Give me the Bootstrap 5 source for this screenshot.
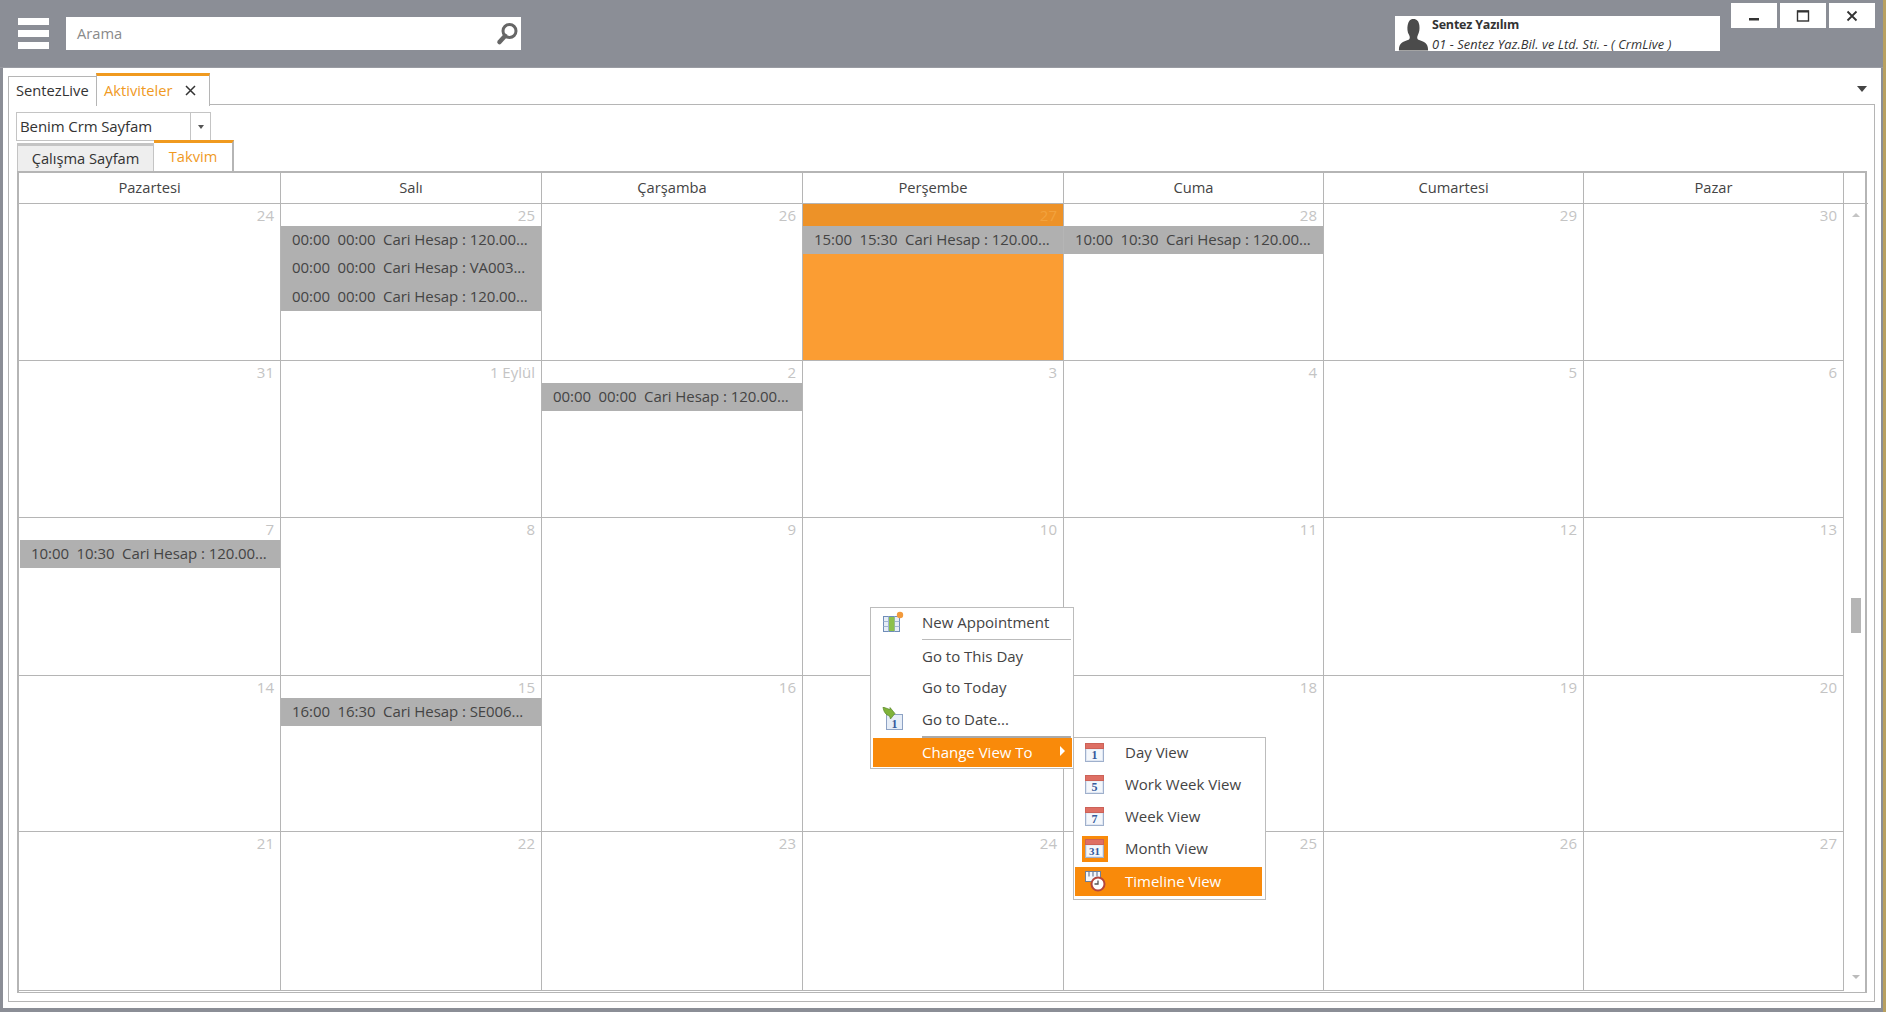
<!DOCTYPE html>
<html lang="tr">
<head>
<meta charset="utf-8">
<title>Takvim</title>
<link rel="stylesheet" href="https://cdn.jsdelivr.net/npm/bootstrap@5.3.0/dist/css/bootstrap.min.css">
<style>
html,body{height:100%;overflow:hidden}
body{background:#8b8e96;font-family:"Open Sans","Noto Sans",sans-serif;font-size:14.7px;color:#444;border-right:3px solid #b8a060}
.app-shell{height:1012px;width:1883px}
.top-bar{height:68px;flex:none;padding-left:18px;position:relative;border-bottom:1px solid #9a9ca3}
.burger{width:31px;height:31px;margin-top:18px;display:flex;flex-direction:column;justify-content:space-between;flex:none}
.burger i{display:block;height:7px;background:#fff}
.search-box{width:455px;height:33px;margin:17px 0 0 17px;background:#fff;color:#8a8a8a;padding:0 2px 0 11px;flex:none}
.user-box{width:325px;height:35px;background:#fff;margin:16px 0 0 874px;flex:none;color:#333;line-height:1}
.user-name{font-weight:700;font-size:12.5px;margin-top:3px;letter-spacing:-.2px}
.user-firm{font-style:italic;font-size:12.8px;margin-top:6px;letter-spacing:.1px;white-space:nowrap}
.win-btns{margin:3px 0 0 11px;gap:3px}
.win-btn{width:46px;height:25px;background:#fff;display:flex;align-items:center;justify-content:center;padding:0;border:0;border-radius:0}
.win-body{flex:1;background:#fff;margin:0 2px 4px 3px;padding:5px 6px 6px 5px;min-height:0;position:relative;display:flex;flex-direction:column}
.doc-tabs{height:32px;flex:none;position:relative;border-bottom:1px solid #b5b5b5;flex-wrap:nowrap}
.doc-tab{border:1px solid #b5b5b5;border-bottom:0;height:29px;margin-top:3px;padding:0 7px 2px;display:flex;align-items:center;color:#333;background:#fff;position:relative}
.doc-tab.tab-first{width:89px}
.doc-tab.tab-on{width:114px;height:33px;margin-top:0;border-top:3px solid #f09a1f;color:#f09a1f;padding-top:0;margin-left:-1px;justify-content:space-between;padding-right:13px;margin-bottom:-1px}
.tab-menu{margin-left:auto;margin-right:8px;margin-top:13px;width:0;height:0;border:5px solid transparent;border-top:6px solid #444;border-bottom:0}
.doc-panel{flex:1;border:1px solid #b5b5b5;border-top:0;padding:7px 7px 8px 7px;min-height:0;display:flex;flex-direction:column}
.combo{width:195px;height:29px;border:1px solid #c4c4c4;flex:none;color:#333}
.combo-text{flex:1;padding-left:3px;line-height:27px;font-size:15px;letter-spacing:-.1px}
.combo-arrow{width:20px;border-left:1px solid #c4c4c4;display:flex;align-items:center;justify-content:center}
.combo-arrow b{width:0;height:0;border:3px solid transparent;border-top:4px solid #555;border-bottom:0}
.sub-tabs{height:31px;flex:none;margin-top:-1px;margin-left:1px;position:relative;flex-wrap:nowrap;align-items:flex-end}
.sub-tab{height:28px;display:flex;align-items:center;justify-content:center;border:1px solid #c4c4c4;border-bottom:0;background:#eee;color:#333;width:137px;border-top:3px solid #c4c4c4}
.sub-tab.tab-on{height:31px;width:80px;background:#fff;border-top:3px solid #f09a1f;color:#f09a1f;border-left:0;border-right:2px solid #b5b5b5;padding-bottom:2px}
.cal-grid{flex:1;display:grid;grid-template-columns:262px 261px 261px 261px 260px 260px 260px 24px;grid-template-rows:31px 157px 157px 158px 156px 159px;border:2px solid #b5b5b5;border-bottom:1px solid #b5b5b5;margin-left:1px;width:1850px;position:relative;min-height:0;outline:1px solid #b5b5b5;outline-offset:-1px}
.cal-head{display:flex;align-items:center;justify-content:center;border-right:1px solid #b5b5b5;border-bottom:1px solid #b5b5b5;color:#444;padding-bottom:1px}
.cal-corner{border-bottom:1px solid #b5b5b5}
.cal-cell{border-right:1px solid #b5b5b5;border-bottom:1px solid #b5b5b5;overflow:hidden;background:#fff}
.cal-day{height:22px;line-height:22px;text-align:right;padding-right:6px;color:#c4c4c4;font-size:15px}
.cal-event{height:28.3px;line-height:27px;background:#b0b0b0;color:#444;padding-left:11px;white-space:pre;font-size:15px;letter-spacing:-.07px}
.cal-event.ev-inset{margin-left:1px}
.cal-cell.cell-today{background:#fb9d33}
.cal-cell.cell-today .cal-day{background:#ed9228;color:#f2a23e}
.cal-scroll{grid-column:8;grid-row:2/7;position:relative;display:flex;flex-direction:column;align-items:center;padding:9px 0 12px}
.arr-up{width:0;height:0;border:4px solid transparent;border-bottom:4px solid #c4c4c4;border-top:0}
.arr-down{width:0;height:0;border:4px solid transparent;border-top:4px solid #bbb;border-bottom:0;margin-top:auto}
.thumb{width:10px;height:35px;background:#b5b5b5;margin-top:381px}
.ctx-menu{position:absolute;display:block;border:1px solid #bcbcbc;border-radius:0;background:#fff;padding:0;margin:0;min-width:0;box-shadow:none;color:#444;font-size:15px;z-index:5}
.ctx-main{left:867px;top:539px;width:204px;height:162px;padding:0 1px 2px 2px}
.ctx-sub{left:1070px;top:669px;width:193px;height:163px;padding:0 3px 0 1px}
.ctx-sub li:first-child{margin-top:-1.4px}
.ctx-menu .dropdown-item{display:flex;align-items:center;padding:0;color:#444;background:transparent;position:relative}
.ctx-ico{width:49px;flex:none;display:flex;justify-content:center;padding-right:9px}
.ctx-sub .ctx-ico{width:50px;padding-right:11px}
.ctx-main .dropdown-item{height:31.5px}
.ctx-main li:first-child .dropdown-item{height:28.7px;margin-bottom:2.6px}
.ctx-sub .dropdown-item{height:32px}
.ctx-menu .dropdown-item.item-on{background:#f98a0a;color:#fff;height:29px}
.ctx-sub .dropdown-item.item-on{margin-top:2.4px;height:28.5px}
.ctx-rule{height:1px;background:#bbb;margin-left:49px;margin-right:1px}
.ctx-rule.rule-thick{height:2px;background:#aaa;margin-top:1.2px}
.sub-arrow{position:absolute;right:7px;top:8px;width:0;height:0;border:5px solid transparent;border-left:5px solid #fff;border-right:0}
.month-ico{background:#f98a0a;width:26px;height:26px;display:flex;align-items:center;justify-content:center}
svg text{font-family:"Liberation Serif",serif;font-weight:700}
</style>
</head>
<body>
<svg width="0" height="0" class="position-absolute">
<defs>
<g id="calbase">
<rect x=".5" y=".5" width="18" height="18" fill="#dfe6f2" stroke="#9fb0cc"/>
<rect x=".5" y=".5" width="18" height="5" fill="#de6f64" stroke="#cc6258"/>
<rect x="2" y="6.5" width="15" height="10.5" fill="#f4f7fb"/>
</g>
</defs>
</svg>
<div class="app-shell d-flex flex-column">
  <header class="top-bar d-flex">
    <div class="burger"><i></i><i></i><i></i></div>
    <div class="search-box d-flex align-items-center justify-content-between">
      <span>Arama</span>
      <svg width="24" height="26" viewBox="0 0 24 26"><circle cx="14.5" cy="10" r="6.5" fill="none" stroke="#666" stroke-width="3"/><path d="M10 15 L4.5 21" stroke="#666" stroke-width="4.500" stroke-linecap="round"/></svg>
    </div>
    <div class="user-box d-flex">
      <svg width="37" height="35" viewBox="0 0 38 35"><path d="M4 35 C4 27 8 26 14 24 C15.500 23 15.500 21 14.500 19 C12.500 16 12.500 12 13 9 C14 4 16 2.500 19 2.500 C22.500 2.500 24.500 5 25 9 C25.500 13 25 16 23.500 19 C22.500 21 22.500 23 24 24 C30 26 34 27 34 35 Z" fill="#4b4b4b"/></svg>
      <div>
        <div class="user-name">Sentez Yazılım</div>
        <div class="user-firm">01 - Sentez Yaz.Bil. ve Ltd. Sti. - ( CrmLive )</div>
      </div>
    </div>
    <div class="win-btns d-flex">
      <button class="win-btn" type="button" aria-label="Simge durumuna küçült"><svg width="14" height="14" viewBox="0 0 14 14"><rect x="2" y="9" width="10" height="2.500" fill="#333"/></svg></button>
      <button class="win-btn" type="button" aria-label="Ekranı kapla"><svg width="14" height="14" viewBox="0 0 14 14"><rect x="1.500" y="2" width="11" height="10" fill="none" stroke="#333" stroke-width="1.400"/><rect x="1" y="1.500" width="12" height="2" fill="#333"/></svg></button>
      <button class="win-btn" type="button" aria-label="Kapat"><svg width="14" height="14" viewBox="0 0 14 14"><path d="M2.500 2.500 L11.500 11.500 M11.500 2.500 L2.500 11.500" stroke="#333" stroke-width="1.800"/></svg></button>
    </div>
  </header>

  <main class="win-body">
    <div class="doc-tabs d-flex">
      <div class="doc-tab tab-first">SentezLive</div>
      <div class="doc-tab tab-on"><span>Aktiviteler</span><svg width="11" height="11" viewBox="0 0 11 11"><path d="M1 1 L10 10 M10 1 L1 10" stroke="#333" stroke-width="1.500"/></svg></div>
      <span class="tab-menu"></span>
    </div>
    <div class="doc-panel">
      <div class="combo d-flex"><div class="combo-text">Benim Crm Sayfam</div><div class="combo-arrow"><b></b></div></div>
      <div class="sub-tabs d-flex">
        <div class="sub-tab">Çalışma Sayfam</div>
        <div class="sub-tab tab-on">Takvim</div>
      </div>
      <div class="cal-grid">
        <div class="cal-head">Pazartesi</div><div class="cal-head">Salı</div><div class="cal-head">Çarşamba</div><div class="cal-head">Perşembe</div><div class="cal-head">Cuma</div><div class="cal-head">Cumartesi</div><div class="cal-head">Pazar</div><div class="cal-corner"></div>

        <div class="cal-cell" style="grid-column:1"><div class="cal-day">24</div></div>
        <div class="cal-cell"><div class="cal-day">25</div><div class="cal-event">00:00  00:00  Cari Hesap : 120.00...</div><div class="cal-event">00:00  00:00  Cari Hesap : VA003...</div><div class="cal-event">00:00  00:00  Cari Hesap : 120.00...</div></div>
        <div class="cal-cell"><div class="cal-day">26</div></div>
        <div class="cal-cell cell-today"><div class="cal-day">27</div><div class="cal-event">15:00  15:30  Cari Hesap : 120.00...</div></div>
        <div class="cal-cell"><div class="cal-day">28</div><div class="cal-event">10:00  10:30  Cari Hesap : 120.00...</div></div>
        <div class="cal-cell"><div class="cal-day">29</div></div>
        <div class="cal-cell"><div class="cal-day">30</div></div>

        <div class="cal-cell" style="grid-column:1"><div class="cal-day">31</div></div>
        <div class="cal-cell"><div class="cal-day">1 Eylül</div></div>
        <div class="cal-cell"><div class="cal-day">2</div><div class="cal-event">00:00  00:00  Cari Hesap : 120.00...</div></div>
        <div class="cal-cell"><div class="cal-day">3</div></div>
        <div class="cal-cell"><div class="cal-day">4</div></div>
        <div class="cal-cell"><div class="cal-day">5</div></div>
        <div class="cal-cell"><div class="cal-day">6</div></div>

        <div class="cal-cell" style="grid-column:1"><div class="cal-day">7</div><div class="cal-event ev-inset">10:00  10:30  Cari Hesap : 120.00...</div></div>
        <div class="cal-cell"><div class="cal-day">8</div></div>
        <div class="cal-cell"><div class="cal-day">9</div></div>
        <div class="cal-cell"><div class="cal-day">10</div></div>
        <div class="cal-cell"><div class="cal-day">11</div></div>
        <div class="cal-cell"><div class="cal-day">12</div></div>
        <div class="cal-cell"><div class="cal-day">13</div></div>

        <div class="cal-cell" style="grid-column:1"><div class="cal-day">14</div></div>
        <div class="cal-cell"><div class="cal-day">15</div><div class="cal-event">16:00  16:30  Cari Hesap : SE006...</div></div>
        <div class="cal-cell"><div class="cal-day">16</div></div>
        <div class="cal-cell"><div class="cal-day">17</div></div>
        <div class="cal-cell"><div class="cal-day">18</div></div>
        <div class="cal-cell"><div class="cal-day">19</div></div>
        <div class="cal-cell"><div class="cal-day">20</div></div>

        <div class="cal-cell" style="grid-column:1"><div class="cal-day">21</div></div>
        <div class="cal-cell"><div class="cal-day">22</div></div>
        <div class="cal-cell"><div class="cal-day">23</div></div>
        <div class="cal-cell"><div class="cal-day">24</div></div>
        <div class="cal-cell"><div class="cal-day">25</div></div>
        <div class="cal-cell"><div class="cal-day">26</div></div>
        <div class="cal-cell"><div class="cal-day">27</div></div>

        <div class="cal-scroll"><span class="arr-up"></span><span class="thumb"></span><span class="arr-down"></span></div>
      </div>
    </div>

    <ul class="dropdown-menu ctx-menu ctx-main list-unstyled">
      <li><a class="dropdown-item" href="#"><span class="ctx-ico"><svg width="22" height="22" viewBox="0 0 22 22"><rect x="1.500" y="5.500" width="16" height="15" fill="#e6edf7" stroke="#6f8db8"/><path d="M1.500 10.500H17.500M1.500 15.500H17.500M6.500 5.500V20.500M12.500 5.500V20.500" stroke="#9fb4d3"/><rect x="7" y="6" width="5.500" height="14" fill="#8cc04b"/><circle cx="18" cy="4" r="3.200" fill="#f29a3c"/></svg></span>New Appointment</a></li>
      <li class="ctx-rule"></li>
      <li><a class="dropdown-item" href="#"><span class="ctx-ico"></span>Go to This Day</a></li>
      <li><a class="dropdown-item" href="#"><span class="ctx-ico"></span>Go to Today</a></li>
      <li><a class="dropdown-item" href="#"><span class="ctx-ico"><svg width="22" height="24" viewBox="0 0 22 24"><rect x="4.500" y="7.500" width="16" height="15" fill="#e6edf7" stroke="#8da2c4"/><text x="12.500" y="20.500" font-size="12" fill="#345a9c" text-anchor="middle">1</text><path d="M1 0 L8 2.500 L8 .5 L13 6.500 L8.500 12 L7.500 9 C4 8 1.500 5 1 0Z" fill="#7fb23a" stroke="#4f7f1f" stroke-width=".6"/></svg></span>Go to Date...</a></li>
      <li class="ctx-rule rule-thick"></li>
      <li><a class="dropdown-item item-on" href="#"><span class="ctx-ico"></span>Change View To<span class="sub-arrow"></span></a></li>
    </ul>

    <ul class="dropdown-menu ctx-menu ctx-sub list-unstyled">
      <li><a class="dropdown-item" href="#"><span class="ctx-ico"><svg width="19" height="19" viewBox="0 0 19 19"><use href="#calbase"/><text x="9.500" y="16" font-size="12" fill="#345a9c" text-anchor="middle">1</text></svg></span>Day View</a></li>
      <li><a class="dropdown-item" href="#"><span class="ctx-ico"><svg width="19" height="19" viewBox="0 0 19 19"><use href="#calbase"/><text x="9.500" y="16" font-size="12" fill="#345a9c" text-anchor="middle">5</text></svg></span>Work Week View</a></li>
      <li><a class="dropdown-item" href="#"><span class="ctx-ico"><svg width="19" height="19" viewBox="0 0 19 19"><use href="#calbase"/><text x="9.500" y="16" font-size="12" fill="#345a9c" text-anchor="middle">7</text></svg></span>Week View</a></li>
      <li><a class="dropdown-item" href="#"><span class="ctx-ico"><span class="month-ico"><svg width="19" height="19" viewBox="0 0 19 19"><use href="#calbase"/><text x="9.500" y="16" font-size="11" fill="#345a9c" text-anchor="middle">31</text></svg></span></span>Month View</a></li>
      <li><a class="dropdown-item item-on" href="#"><span class="ctx-ico"><svg width="22" height="22" viewBox="0 0 22 22"><rect x="1.500" y="1.500" width="15" height="10" fill="#f4f7fb" stroke="#6f7f98"/><path d="M5 1.500V6.500M9 1.500V6.500M13 1.500V6.500" stroke="#6f7f98" stroke-width="1.200"/><circle cx="14" cy="14" r="6.500" fill="#fff" stroke="#b5473d" stroke-width="2"/><path d="M14 10.500V14H10.500" fill="none" stroke="#555" stroke-width="1.300"/></svg></span>Timeline View</a></li>
    </ul>
  </main>
</div>
</body>
</html>
